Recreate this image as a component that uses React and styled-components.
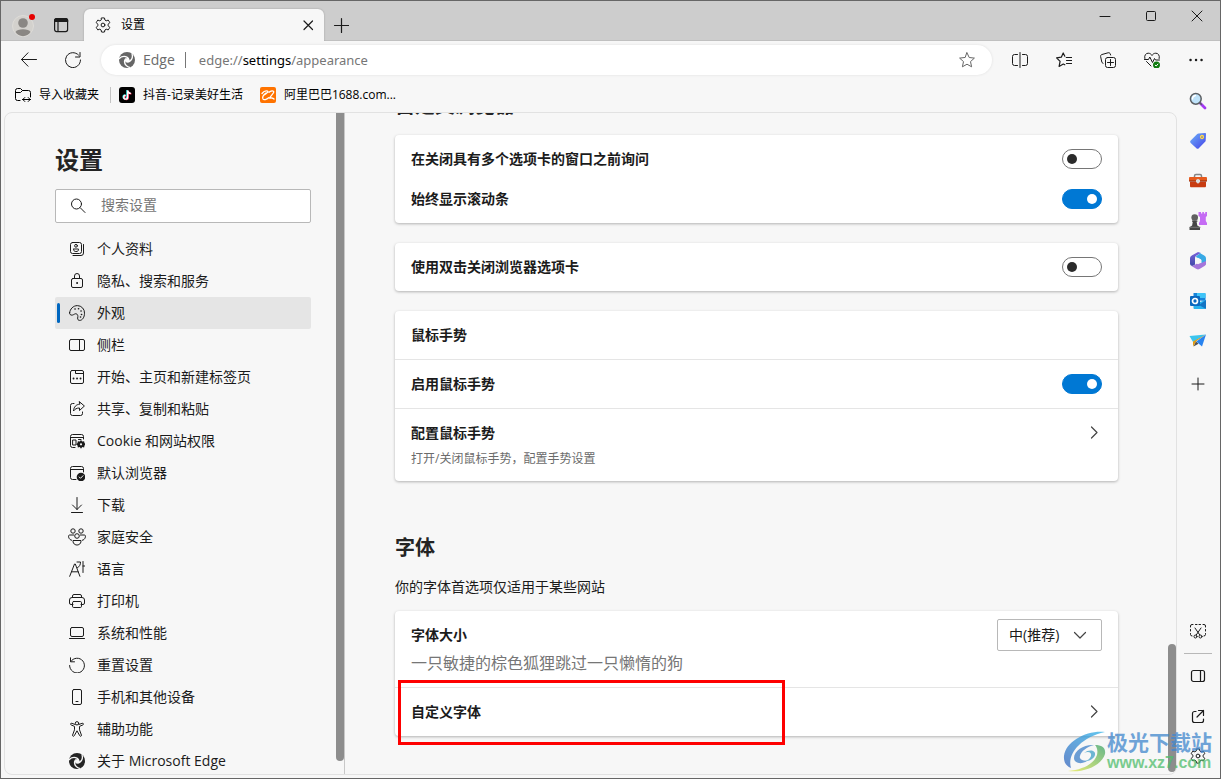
import React, { useState } from "react";
import styled, { createGlobalStyle } from "styled-components";

const GlobalStyle = createGlobalStyle`
  * {
    box-sizing: border-box;
  }
  body {
    margin: 0;
    color: #1b1b1b;
    font-family: "Open Sans", "Noto Sans CJK SC", sans-serif;
    font-size: 14px;
    line-height: 20px;
  }
  button, input, select {
    color: inherit;
    font: inherit;
  }
  button {
    padding: 0;
    border: 0;
    background: none;
  }
  a {
    color: inherit;
    text-decoration: none;
  }
  svg {
    display: block;
    flex: none;
  }
`;

const Window = styled.div`
  position: relative;
  display: flex;
  flex-direction: column;
  height: 100vh;
  border: 1px solid #666666;
  background-color: #f7f7f7;
  overflow: hidden;
`;

const IconButton = styled.button`
  display: flex;
  flex: none;
  align-items: center;
  justify-content: center;
  width: ${(props) => props.$width || 44}px;
  height: ${(props) => props.$height || 32}px;
`;

/* title bar */
const TitleBar = styled.header`
  display: flex;
  flex: none;
  height: 40px;
  padding-left: 3px;
  background-color: #cdcdcd;
  box-shadow: inset 0 -1px 0 #c0c0c0;
`;
const TitleButtons = styled.div`
  display: flex;
  align-items: center;
  padding-top: 8px;
`;
const Tab = styled.div`
  display: flex;
  align-items: center;
  width: 240px;
  margin-top: 8px;
  margin-left: 4px;
  padding-left: 11px;
  border-radius: 6px 6px 0 0;
  background-color: #f7f7f7;
  box-shadow: 0 0 2px rgba(0, 0, 0, 0.25);
  clip-path: inset(-3px -3px 0 -3px);
`;
const TabTitle = styled.span`
  flex: 1;
  padding-left: 10px;
  color: #000000;
  font-size: 12px;
`;
const WindowButtons = styled.div`
  display: flex;
  margin-left: auto;
`;

/* address bar */
const Toolbar = styled.div`
  display: flex;
  flex: none;
  align-items: center;
  height: 38px;
  padding: 0 2px 0 6px;
`;
const AddressBar = styled.div`
  display: flex;
  flex: 1;
  align-items: center;
  height: 30px;
  margin: 0 6px;
  padding: 0 3px 0 18px;
  border-radius: 15px;
  background-color: #ffffff;
  box-shadow: 0 0 3px rgba(0, 0, 0, 0.1);
  color: #6b6b6b;
`;
const SiteName = styled.span`
  padding: 0 10px 0 8px;
`;
const AddressDivider = styled.span`
  width: 1px;
  height: 16px;
  background-color: #767676;
`;
const Address = styled.div`
  flex: 1;
  padding-left: 13px;
  outline: none;
  color: #767676;
  font-family: "Noto Sans", sans-serif;
  font-size: 13px;

  strong {
    color: #000000;
    font-weight: 400;
  }
`;

const Body = styled.div`
  display: flex;
  flex: 1;
  min-height: 0;
`;
const Column = styled.div`
  display: flex;
  flex: 1;
  flex-direction: column;
  min-width: 0;
  padding: 0 0 3px 3px;
`;
const Bookmarks = styled.nav`
  display: flex;
  flex: none;
  align-items: center;
  gap: 17px;
  height: 33px;
  padding: 0 0 2px 11px;
  color: #000000;
  font-size: 12px;
`;
const Bookmark = styled.a`
  display: flex;
  align-items: center;
  gap: 8px;
`;
const BookmarkImport = styled(Bookmark)`
  height: 16px;
  margin-right: -9px;
  padding-right: 11px;
  border-right: 1px solid #c4c4c4;
`;

/* settings page */
const Page = styled.div`
  display: flex;
  flex: 1;
  min-height: 0;
  border: 1px solid #e2e2e2;
  border-radius: 8px;
  overflow: hidden;
`;
const Sidebar = styled.aside`
  display: flex;
  flex: none;
  width: 340px;
  border-right: 1px solid #c8c8c8;
`;
const SidebarContent = styled.div`
  flex: 1;
  padding: 31px 25px 0 50px;
`;
const SidebarTitle = styled.h1`
  margin: 0 0 13px;
  color: #242424;
  font-size: 24px;
  line-height: 32px;
`;
const SearchBox = styled.label`
  display: flex;
  align-items: center;
  gap: 15px;
  height: 34px;
  margin-bottom: 10px;
  padding: 0 14px 2px;
  border: 1px solid #b8b8b8;
  border-radius: 2px;
  background-color: #ffffff;
`;
const SearchInput = styled.input`
  flex: 1;
  min-width: 0;
  padding: 0;
  border: 0;
  outline: none;
  background: none;

  &::placeholder {
    color: #767676;
    opacity: 1;
  }
`;
const NavItem = styled.a`
  display: flex;
  align-items: center;
  gap: 12px;
  height: 32px;
  padding-left: ${(props) => (props.$active ? 9 : 14)}px;
  border-radius: 2px;
  background-color: ${(props) => (props.$active ? "#e5e5e5" : "transparent")};

  &::before {
    content: "";
    display: ${(props) => (props.$active ? "block" : "none")};
    width: 3px;
    height: 20px;
    margin: 0 -3px 0 -7px;
    border-radius: 2px;
    background-color: #0067c0;
  }
`;
const SidebarThumb = styled.div`
  width: 8px;
  margin-bottom: 13px;
  border-radius: 0 0 4px 4px;
  background-color: #8d8d8d;
`;
const Main = styled.main`
  display: flex;
  flex: 1;
  flex-direction: column;
  justify-content: flex-end;
  min-width: 0;
  padding: 0 50px 38px;
  overflow: hidden;

  > * {
    flex: none;
  }
`;
const MainThumb = styled.div`
  align-self: flex-end;
  width: 8px;
  height: 128px;
  margin-bottom: 2px;
  border-radius: 4px;
  background-color: #8d8d8d;
`;
const SectionTitle = styled.h2`
  margin: 0 0 15px;
  color: #242424;
  font-size: 20px;
  line-height: 28px;
`;
const SectionText = styled.p`
  margin: 0 0 14px;
`;
const Card = styled.section`
  margin-bottom: ${(props) => props.$gap || 0}px;
  padding: ${(props) => props.$padding || 0}px 0;
  border-radius: 4px;
  background-color: #ffffff;
  box-shadow: 0 1px 3px rgba(0, 0, 0, 0.28);
`;
const Row = styled.div`
  position: relative;
  display: flex;
  align-items: ${(props) => (props.$top ? "flex-start" : "center")};
  justify-content: space-between;
  min-height: ${(props) => props.$height || 48}px;
  padding: ${(props) => (props.$top ? "8px" : "0")} 16px 0;
  border-top: ${(props) => (props.$lined ? "1px solid #e5e5e5" : "0")};
`;
const Texts = styled.div`
  display: flex;
  flex-direction: column;
  gap: 6px;
  padding-top: 6px;
`;
const Label = styled.label`
  font-weight: 600;
`;
const Hint = styled.span`
  color: #6b6b6b;
  font-size: 12px;
`;
const Sample = styled.span`
  color: #767676;
  font-size: 16px;
  line-height: 24px;
`;
const RowButton = styled(IconButton)`
  margin-right: -8px;
`;
const Toggle = styled.input.attrs({ type: "checkbox" })`
  display: flex;
  align-items: center;
  justify-content: ${(props) => (props.checked ? "flex-end" : "flex-start")};
  appearance: none;
  width: 40px;
  height: 20px;
  margin: 0;
  padding: 0 4px;
  border: 1px solid ${(props) => (props.checked ? "#0078d4" : "#767676")};
  border-radius: 10px;
  background-color: ${(props) => (props.checked ? "#0078d4" : "#ffffff")};

  &::before {
    content: "";
    width: 10px;
    height: 10px;
    border-radius: 50%;
    background-color: ${(props) => (props.checked ? "#ffffff" : "#2b2b2b")};
  }
`;
const SelectBox = styled.div`
  position: relative;

  svg {
    position: absolute;
    top: 8px;
    right: 14px;
    pointer-events: none;
  }
`;
const Select = styled.select`
  display: block;
  appearance: none;
  width: 105px;
  height: 32px;
  padding: 0 0 0 11px;
  border: 1px solid #b8b8b8;
  border-radius: 2px;
  background-color: #ffffff;
`;
const Highlight = styled.div`
  position: absolute;
  top: -8px;
  left: 3px;
  width: 387px;
  height: 65px;
  border: 3px solid #fe0000;
  pointer-events: none;
`;

/* right app rail */
const Rail = styled.aside`
  display: flex;
  flex: none;
  flex-direction: column;
  align-items: center;
  width: 43px;
  padding: 2px 1px 2px 0;
`;
const RailSpace = styled.div`
  flex: 1;
  min-height: 4px;
`;
const RailLine = styled.hr`
  width: 28px;
  margin: 2px 0;
  border: 0;
  border-top: 1px solid #b8b8b8;
`;

const Watermark = styled.div`
  position: absolute;
  right: 8px;
  bottom: 5px;
  display: flex;
  align-items: center;
  gap: 1px;
  opacity: 0.75;
  pointer-events: none;
`;
const WatermarkName = styled.div`
  color: #4187cd;
  font-size: 21px;
  font-weight: 700;
  line-height: 22px;
`;
const WatermarkUrl = styled.div`
  color: #4fbd6c;
  font-family: "Liberation Sans", sans-serif;
  font-size: 16px;
  font-weight: 700;
  line-height: 20px;
`;

const Icon = ({ size = 16, children, width = 1, color = "currentColor" }) => (
  <svg
    width={size}
    height={size}
    viewBox={`0 0 ${size} ${size}`}
    fill="none"
    stroke={color}
    strokeWidth={width}
    strokeLinecap="round"
    strokeLinejoin="round"
    aria-hidden="true"
  >
    {children}
  </svg>
);

const EdgeIcon = ({ color, cut }) => (
  <svg width="16" height="16" viewBox="0 0 16 16" fill="none" aria-hidden="true">
    <circle cx="8" cy="8" r="8" fill={color} />
    <circle cx="8.200" cy="8.200" r="2.300" fill={cut} />
    {[0, 120, 240].map((angle) => (
      <path
        key={angle}
        d="M-.3 6.300C2 3.600 5.600 3 8.200 4.500c1.500.9 2.200 2.200 2.200 3.500l-1.600-1C6.800 4.300 3 4.300.3 7.500Z"
        transform={`rotate(${angle} 8 8)`}
        fill={cut}
      />
    ))}
  </svg>
);

const GearIcon = () => (
  <Icon>
    <path d="M6.500 1a7.500 7.500 0 0 1 3 0l.4 2 1.300.8 2-.7a7.500 7.500 0 0 1 1.500 2.600L13.200 7.200v1.600l1.500 1.500a7.500 7.500 0 0 1-1.500 2.600l-2-.7-1.300.8-.4 2a7.500 7.500 0 0 1-3 0l-.4-2-1.300-.8-2 .7a7.500 7.500 0 0 1-1.500-2.600l1.500-1.500V7.200L1.300 5.700a7.500 7.500 0 0 1 1.500-2.600l2 .7L6.100 3Z" />
    <circle cx="8" cy="8" r="1.900" />
  </Icon>
);

const SidePanelIcon = () => (
  <Icon>
    <rect x=".5" y="2.500" width="15" height="11" rx="1.500" />
    <path d="M10.500 2.500v11" />
  </Icon>
);

const ChevronRight = () => (
  <Icon color="#444444" width={1.2}>
    <path d="m5.500 2 5.500 5.500L5.500 13" />
  </Icon>
);

const navItems = [
  {
    name: "个人资料",
    icon: (
      <Icon>
        <rect x="1.500" y="1.500" width="11" height="11" rx="2" />
        <circle cx="7" cy="4.800" r="1.400" />
        <path d="M4.500 8h5v.8c0 2.400-5 2.400-5 0ZM14.500 3.500V12a2.500 2.500 0 0 1-2.500 2.500H4" />
      </Icon>
    ),
  },
  {
    name: "隐私、搜索和服务",
    icon: (
      <Icon>
        <rect x="2.500" y="5.500" width="11" height="9" rx="1.500" />
        <path d="M5.500 5.500V3a2.500 2.500 0 0 1 5 0v2.500" />
        <circle cx="8" cy="10" r=".5" fill="currentColor" />
      </Icon>
    ),
  },
  {
    name: "外观",
    active: true,
    icon: (
      <Icon>
        <path d="M.6 7.800C1 4 4.200.6 8.400.6a7.200 7.200 0 0 1 7.100 7.600c0 3.900-2 7.200-4.800 7.200-1.500 0-2.300-1-2-2.400.4-2 .2-3.700-1.500-4.200-1.300-.4-2.300 1-3.900 1.300C1.500 10.400.4 9.300.6 7.800Z" />
        <path d="M6 4h.1M9.500 3.700h.1M12 6h.1M12.500 9.500h.1M11.500 12h.1" strokeWidth="1.600" />
      </Icon>
    ),
  },
  { name: "侧栏", icon: <SidePanelIcon /> },
  {
    name: "开始、主页和新建标签页",
    icon: (
      <Icon>
        <rect x="1.500" y="1.500" width="13" height="13" rx="1.500" />
        <path d="M6.500 1.500v3h8" />
        <path d="M4.500 9.500h.1M8 9.500h.1M11.500 9.500h.1" strokeWidth="1.800" />
      </Icon>
    ),
  },
  {
    name: "共享、复制和粘贴",
    icon: (
      <Icon>
        <path d="M5 2.500H3.500a2 2 0 0 0-2 2v8a2 2 0 0 0 2 2h8a2 2 0 0 0 2-2V11" />
        <path d="M10.500.8 15.400 5l-4.900 4.500V7C7.500 7 6 8 4.500 10c.3-4 2.500-6.600 6-6.800Z" />
      </Icon>
    ),
  },
  {
    name: "Cookie 和网站权限",
    icon: (
      <Icon>
        <path d="M14.500 6V3.500a2 2 0 0 0-2-2h-9a2 2 0 0 0-2 2v9a2 2 0 0 0 2 2H6M1.500 4.500h13M4 7h3v5H4ZM9.500 6.500H12" />
        <path d="m12 7 1.200 1.500 1.900-.3.400 1.900 1.200 1.200-1.200 1.200-.4 1.900-1.900-.3L12 15.800l-1.200-1.700-1.900.3-.4-1.900-1.200-1.200 1.200-1.200.4-1.900 1.900.3Z" fill="currentColor" stroke="none" />
        <circle cx="12" cy="11.300" r="1.100" fill="#f7f7f7" stroke="none" />
      </Icon>
    ),
  },
  {
    name: "默认浏览器",
    icon: (
      <Icon>
        <path d="M14.500 7V3.500a2 2 0 0 0-2-2h-9a2 2 0 0 0-2 2v9a2 2 0 0 0 2 2H7M1.500 4.500h13" />
        <circle cx="12" cy="12" r="4.300" fill="currentColor" stroke="none" />
        <path d="m10.200 12 1.300 1.300 2.500-2.600" stroke="#f7f7f7" />
      </Icon>
    ),
  },
  {
    name: "下载",
    icon: (
      <Icon>
        <path d="M8 .5v12M3.500 8 8 12.500 12.500 8M2.500 15.500h11" />
      </Icon>
    ),
  },
  {
    name: "家庭安全",
    icon: (
      <svg width="18" height="18" viewBox="0 0 18 18" fill="none" stroke="currentColor" aria-hidden="true">
        <circle cx="5" cy="3" r="2.200" />
        <circle cx="13" cy="3" r="2.200" />
        <circle cx="9" cy="8" r="2.300" />
        <path d="M6 7H1.500C-.3 7 .5 12 4 12.300M12 7h4.500c1.800 0 1 5-2.500 5.300M5 12.500h8c.5 6-8.500 6-8 0Z" />
      </svg>
    ),
    wide: true,
  },
  {
    name: "语言",
    icon: (
      <Icon>
        <path d="M.7 15.300 5.500 3h.8l4.600 12.300M2.500 10.800h6.700M8 1h3.500c0 2.600-.8 4.500-3 5.700M14 .5v11M14 5h1.700" />
      </Icon>
    ),
  },
  {
    name: "打印机",
    icon: (
      <Icon>
        <path d="M3.500 4.500V3a1.500 1.500 0 0 1 1.500-1.500h6A1.500 1.500 0 0 1 12.500 3v1.500M4 11.500H2A1.500 1.500 0 0 1 .5 10V7A2.500 2.500 0 0 1 3 4.500h10A2.500 2.500 0 0 1 15.500 7v3a1.500 1.500 0 0 1-1.500 1.500h-2" />
        <rect x="3.500" y="8.500" width="9" height="6" rx="1.200" />
      </Icon>
    ),
  },
  {
    name: "系统和性能",
    icon: (
      <Icon>
        <rect x="1.500" y="2.500" width="13" height="9" rx="1.500" />
        <path d="M.5 13.500h15" />
      </Icon>
    ),
  },
  {
    name: "重置设置",
    icon: (
      <Icon>
        <path d="M1.500.8v4h4M1.800 4.500A7.400 7.400 0 1 1 .6 8.500" />
      </Icon>
    ),
  },
  {
    name: "手机和其他设备",
    icon: (
      <Icon>
        <rect x="3.500" y=".5" width="9" height="15" rx="1.500" />
        <path d="M7 12.500h2" />
      </Icon>
    ),
  },
  {
    name: "辅助功能",
    icon: (
      <Icon>
        <circle cx="8" cy="2.300" r="1.700" />
        <path d="m6.200 3.500-3.400-1.200c-1.300-.4-1.800 1.100-.7 1.600L5.500 5.400v3.400l-1.900 5.200c-.4 1.300 1.200 1.800 1.700.7L8 9.800l2.700 4.900c.5 1.100 2.100.6 1.700-.7l-1.900-5.200V5.400l3.400-1.500c1.100-.5.6-2-.7-1.600L9.800 3.500" />
      </Icon>
    ),
  },
  { name: "关于 Microsoft Edge", icon: <EdgeIcon color="#242424" cut="#f7f7f7" /> },
];

const NavIcon = styled.span`
  display: flex;
  flex: none;
  justify-content: center;
  width: 16px;
`;

const railApps = [
  {
    name: "搜索",
    icon: (
      <Icon size={18}>
        <path d="m11.500 11.500 4.500 4.500" stroke="#a238f2" strokeWidth="2.800" />
        <path d="m10.800 10.800 1.500 1.500" stroke="#5c5f63" strokeWidth="1.500" />
        <circle cx="6.800" cy="6.800" r="5.400" fill="#bfe3fa" stroke="#5c5f63" strokeWidth="1.500" />
        <path d="M3.500 7a3.500 3.500 0 0 1 3-3.500" stroke="#ffffff" strokeWidth="1.300" />
      </Icon>
    ),
  },
  {
    name: "购物",
    icon: (
      <Icon size={18}>
        <defs>
          <linearGradient id="tag" x1="0" y1="0" x2="1" y2="1">
            <stop offset="0" stopColor="#6db3f8" />
            <stop offset="1" stopColor="#4540e8" />
          </linearGradient>
        </defs>
        <path d="M9.500 1.500 16 1c.6 0 1 .4 1 1l-.3 6.500c0 .5-.2.900-.6 1.300l-6.300 6.500c-.7.700-1.700.7-2.400 0L1.700 11c-.7-.7-.7-1.700 0-2.400L8.200 2c.4-.3.800-.5 1.300-.5Z" fill="url(#tag)" stroke="none" />
        <circle cx="13" cy="5" r="1.500" fill="#6878ac" stroke="#ffd94d" strokeWidth="1.300" />
      </Icon>
    ),
  },
  {
    name: "工具",
    icon: (
      <Icon size={18}>
        <path d="M5.500 6V4c0-1 .6-1.500 1.500-1.500h4c.9 0 1.500.5 1.500 1.500v2" stroke="#858585" strokeWidth="1.500" />
        <path d="M0 6.200C0 5.500.5 5 1.200 5h15.600c.7 0 1.200.5 1.200 1.200V9H0Z" fill="#e65a1d" stroke="none" />
        <path d="M1 9.500h16V14c0 .8-.5 1.300-1.300 1.300H2.300C1.500 15.300 1 14.800 1 14Z" fill="#c83b10" stroke="none" />
        <path d="M0 9h18" stroke="#8d290d" />
        <path d="M9 6.700 11 8v2l-2 1.700L7 10V8Z" fill="#d9dcdf" stroke="none" />
      </Icon>
    ),
  },
  {
    name: "游戏",
    icon: (
      <Icon size={18}>
        <path d="M9.500 0H12v1.500h1.300V0h1.600v1.500h1.300V0H18v4l-1.200 1v4l1.200 2v2h-8v-2l1-2V5L9.500 4Z" fill="#c56cf4" stroke="none" />
        <circle cx="5.700" cy="5.500" r="3.300" fill="#606060" stroke="none" />
        <path d="M3 8.500h5.400v1.300H7.600l.7 3.700 2.700 1.800V18H.5v-2.700l2.600-1.800.7-3.700H3Z" fill="#464646" stroke="none" />
        <path d="M1 15.300h10" stroke="#777777" />
      </Icon>
    ),
  },
  {
    name: "Microsoft 365",
    icon: (
      <Icon size={18}>
        <defs>
          <linearGradient id="office" x1="0" y1="0" x2="0" y2="1">
            <stop offset="0" stopColor="#7a62db" />
            <stop offset="1" stopColor="#404aa8" />
          </linearGradient>
        </defs>
        <path d="M9 0 2.800 3.500C1.500 4.300 1 5.200 1 6.700v5c0 1.700 2 2.800 3.700 1.800L6 12.500V6c0-1 .4-1.700 1.200-2.200L12 1Z" fill="url(#office)" stroke="none" />
        <path d="m9 0 6.200 3.500C16.500 4.300 17 5.200 17 6.700V11c0 .7-.2 1.200-.5 1.700L12.500 11V8L7 5c0-.6.300-1 .8-1.300L11 1.500Z" fill="#38a9e5" stroke="none" />
        <path d="M1.300 13c1 1 2.400 1.100 3.400.5L8 11.500l4.500-.5 4.500-2v2.500c0 1.200-.6 2-1.500 2.500l-5 3c-1 .6-2 .6-3 0l-5-3Z" fill="#a576db" stroke="none" />
        <path d="m9 5.800 3 1.700v3L9 12.200 6 10.500v-3Z" fill="#f7f7f7" stroke="none" />
      </Icon>
    ),
  },
  {
    name: "Outlook",
    icon: (
      <Icon size={18}>
        <path d="M4.500 1H15c1 0 1.500.5 1.500 1.500V9l-12-1Z" fill="#1683d9" stroke="none" />
        <path d="M8 1h8.500v5H8Z" fill="#3fc4f7" stroke="none" />
        <path d="m4.500 12 12.500-4v7.500c0 .8-.5 1.500-1.500 1.500h-10c-.7 0-1-.5-1-1Z" fill="#29b2ee" stroke="none" />
        <path d="m17 8-7 5 7 4Z" fill="#1475c4" stroke="none" />
        <rect x="1" y="4" width="10" height="10" rx="1" fill="#0b69bf" stroke="none" />
        <circle cx="6" cy="9" r="2.500" stroke="#ffffff" strokeWidth="1.700" />
      </Icon>
    ),
  },
  {
    name: "Drop",
    icon: (
      <Icon size={18}>
        <path d="M.5 4 17 2.500 4 10Z" fill="#3cc4ed" stroke="none" />
        <path d="M17 2.500 4 9.500v5L7.500 9Z" fill="#e29b10" stroke="none" />
        <path d="M4.500 14.500 7 9.500l2.500 2.200Z" fill="#505050" stroke="none" />
        <path d="m17 2.500-9.700 7L13 14.500Z" fill="#2883f0" stroke="none" />
      </Icon>
    ),
  },
];

const App = () => {
  const [toggles, setToggles] = useState({
    askBeforeClose: false,
    showScrollbar: true,
    doubleClick: false,
    gestures: true,
  });

  const renderToggle = (name) => (
    <Toggle
      id={name}
      checked={toggles[name]}
      onChange={(e) => setToggles({ ...toggles, [name]: e.target.checked })}
    />
  );

  return (
    <>
      <GlobalStyle />
      <Window>
        <TitleBar>
          <TitleButtons>
            <IconButton $width={38} aria-label="个人资料">
              <Icon size={24}>
                <circle cx="12" cy="13" r="10.500" fill="#d3d1cd" stroke="#dedcd8" />
                <circle cx="12" cy="10" r="4.800" fill="#8a8784" stroke="none" />
                <path d="M4.500 19c1.500-3.700 13.500-3.700 15 0-3 5.500-12 5.500-15 0Z" fill="#8a8784" stroke="none" />
                <circle cx="21" cy="4" r="3" fill="#e60000" stroke="none" />
              </Icon>
            </IconButton>
            <IconButton $width={38} aria-label="标签页操作">
              <Icon width={1.2}>
                <rect x="1.600" y="1.600" width="13" height="13" rx="2" />
                <path d="M1.600 4.500V3.600c0-1.200.8-2 2-2h9c1.200 0 2 .8 2 2v.9Z" fill="currentColor" />
                <path d="M5 5v9.500" />
              </Icon>
            </IconButton>
          </TitleButtons>
          <Tab>
            <GearIcon />
            <TabTitle>设置</TabTitle>
            <IconButton $width={32} aria-label="关闭标签页">
              <Icon width={1.2}>
                <path d="m4 4 8.500 8.500M12.500 4 4 12.500" />
              </Icon>
            </IconButton>
          </Tab>
          <TitleButtons>
            <IconButton $width={34} aria-label="新建标签页">
              <Icon width={1.2}>
                <path d="M8.500 1.500v14M1.500 8.500h14" />
              </Icon>
            </IconButton>
          </TitleButtons>
          <WindowButtons>
            <IconButton $width={46} $height={30} aria-label="最小化">
              <Icon>
                <path d="M3 8.500h10" />
              </Icon>
            </IconButton>
            <IconButton $width={46} $height={30} aria-label="最大化">
              <Icon>
                <rect x="3.500" y="3.500" width="9" height="9" rx="1" />
              </Icon>
            </IconButton>
            <IconButton $width={46} $height={30} aria-label="关闭">
              <Icon>
                <path d="m3 3 10 10M13 3 3 13" />
              </Icon>
            </IconButton>
          </WindowButtons>
        </TitleBar>

        <Toolbar>
          <IconButton aria-label="返回">
            <Icon>
              <path d="M.5 7.500h15M7 .8.500 7.500 7 14.200" />
            </Icon>
          </IconButton>
          <IconButton aria-label="刷新">
            <Icon>
              <path d="M15.500 8A7.500 7.500 0 1 1 13.500 3M15 .5v4.500h-4.500" />
            </Icon>
          </IconButton>
          <AddressBar>
            <EdgeIcon color="#666666" cut="#ffffff" />
            <SiteName>Edge</SiteName>
            <AddressDivider />
            <Address
              role="textbox"
              aria-label="地址栏"
              contentEditable
              suppressContentEditableWarning
              spellCheck={false}
            >
              edge://<strong>settings</strong>/appearance
            </Address>
            <IconButton aria-label="添加到收藏夹">
              <Icon color="#666666">
                <path d="m8 .8 2.200 4.700 5.200.6-3.900 3.500 1.100 5.200L8 12.200l-4.600 2.600 1.100-5.200L.6 6.100l5.200-.6Z" />
              </Icon>
            </IconButton>
          </AddressBar>
          <IconButton aria-label="分屏">
            <Icon>
              <path d="M8 .5v15M5.500 2.500H2.500a2 2 0 0 0-2 2v7a2 2 0 0 0 2 2h3M10.500 2.500h3a2 2 0 0 1 2 2v7a2 2 0 0 1-2 2h-3" />
            </Icon>
          </IconButton>
          <IconButton aria-label="收藏夹">
            <Icon width={1.2}>
              <path d="M10.300 5.500H15.500M10.500 8.500h5M10.500 11.500h5M8.800 4.200 7.200 1 5.300 5.200.6 5.800l3.500 3.600-1 5 4.200-2.400 1.500.8" />
            </Icon>
          </IconButton>
          <IconButton aria-label="集锦">
            <Icon>
              <rect x="5.500" y="5.500" width="10" height="10" rx="2" />
              <path d="M10.500 7.500v6M7.500 10.500h6M3 11.500 1.800 10 .6 4.500c-.2-1 .4-1.800 1.400-2l6-1.700c1.200-.3 2 .2 2.300 1.200l.3 1" />
            </Icon>
          </IconButton>
          <IconButton aria-label="浏览器概要">
            <Icon>
              <path d="M.8 6.500C0 3.200 2 1.200 4.200 1.200c1.800 0 3 .9 3.800 2.300.8-1.400 2-2.300 3.800-2.300 2.200 0 4.200 2 3.400 5.300M.5 7.500h4l1.300-2.500 2.700 5.500 2-4 1 1.500h4M2.500 9.500l4.500 4.500" />
              <circle cx="12.500" cy="13" r="3.500" fill="#107c10" stroke="none" />
              <path d="m11.200 13.200 1 .8 1.700-1.900" stroke="#ffffff" />
            </Icon>
          </IconButton>
          <IconButton aria-label="设置及其他">
            <Icon>
              <path d="M2.500 8h.1M8 8h.1M13.500 8h.1" strokeWidth="2.400" />
            </Icon>
          </IconButton>
        </Toolbar>

        <Body>
          <Column>
            <Bookmarks>
              <BookmarkImport href="#import">
                <Icon>
                  <path d="M5 13.500H2.500a2 2 0 0 1-2-2v-8a2 2 0 0 1 2-2h3l2 2h6a2 2 0 0 1 2 2V10M.5 5.500h5l2-2M7.500 12.500h8M9.800 10.500l-2 2 2 2M13.200 10.500l2 2-2 2" />
                </Icon>
                导入收藏夹
              </BookmarkImport>
              <Bookmark href="#douyin">
                <svg width="16" height="16" viewBox="0 0 16 16" fill="none" aria-hidden="true">
                  <rect width="16" height="16" rx="3" fill="#000000" />
                  <path d="M8 3v6.800a1.900 1.900 0 1 1-1.900-1.900M8 3c.2 1.800 1.400 3 3.200 3" stroke="#25f4ee" strokeWidth="1.500" />
                  <path d="M9.200 3.800v6.800a1.900 1.900 0 1 1-1.900-1.900M9.200 3.800c.2 1.800 1.400 3 3.200 3" stroke="#fe2c55" strokeWidth="1.500" />
                  <path d="M8.600 3.400v6.800a1.900 1.900 0 1 1-1.900-1.900M8.600 3.400c.2 1.800 1.400 3 3.200 3" stroke="#ffffff" strokeWidth="1.400" />
                </svg>
                抖音-记录美好生活
              </Bookmark>
              <Bookmark href="#alibaba">
                <svg width="16" height="16" viewBox="0 0 16 16" fill="none" aria-hidden="true">
                  <rect width="16" height="16" rx="2" fill="#ff7300" />
                  <path
                    d="M2 6.500c1.500-2 4-3 5.500-2.500 1.300.5-.8 2.500-3.300 3.800M6 6C3.500 7.800 2.300 10.500 3 12c.7 1.300 3.500.6 5.700-1.300M9 5.200c1.800-1.600 4.600-2 4.800-.4.200 1.500-3.300 3.800-4.300 6.700.9-.9 3.400-.6 4.500.5"
                    stroke="#ffffff"
                    strokeWidth="1.300"
                    strokeLinecap="round"
                  />
                </svg>
                阿里巴巴1688.com...
              </Bookmark>
            </Bookmarks>

            <Page>
              <Sidebar>
                <SidebarContent>
                  <SidebarTitle>设置</SidebarTitle>
                  <SearchBox>
                    <Icon>
                      <circle cx="6.500" cy="7" r="5" />
                      <path d="m10.200 10.700 4.800 4.800" />
                    </Icon>
                    <SearchInput type="text" placeholder="搜索设置" aria-label="搜索设置" />
                  </SearchBox>
                  <nav>
                    {navItems.map((item) => (
                      <NavItem key={item.name} href="#settings" $active={item.active}>
                        <NavIcon>{item.icon}</NavIcon>
                        {item.name}
                      </NavItem>
                    ))}
                  </nav>
                </SidebarContent>
                <SidebarThumb />
              </Sidebar>

              <Main>
                <SectionTitle>自定义浏览器</SectionTitle>
                <Card $gap={20} $padding={4}>
                  <Row $height={40}>
                    <Label htmlFor="askBeforeClose">在关闭具有多个选项卡的窗口之前询问</Label>
                    {renderToggle("askBeforeClose")}
                  </Row>
                  <Row $height={40}>
                    <Label htmlFor="showScrollbar">始终显示滚动条</Label>
                    {renderToggle("showScrollbar")}
                  </Row>
                </Card>
                <Card $gap={20}>
                  <Row>
                    <Label htmlFor="doubleClick">使用双击关闭浏览器选项卡</Label>
                    {renderToggle("doubleClick")}
                  </Row>
                </Card>
                <Card $gap={53}>
                  <Row>
                    <Label as="span">鼠标手势</Label>
                  </Row>
                  <Row $lined $height={49}>
                    <Label htmlFor="gestures">启用鼠标手势</Label>
                    {renderToggle("gestures")}
                  </Row>
                  <Row $lined $top $height={73}>
                    <Texts>
                      <Label htmlFor="configGestures">配置鼠标手势</Label>
                      <Hint>打开/关闭鼠标手势，配置手势设置</Hint>
                    </Texts>
                    <RowButton id="configGestures" $width={32}>
                      <ChevronRight />
                    </RowButton>
                  </Row>
                </Card>

                <SectionTitle>字体</SectionTitle>
                <SectionText>你的字体首选项仅适用于某些网站</SectionText>
                <Card>
                  <Row $top $height={76}>
                    <Texts>
                      <Label htmlFor="fontSize">字体大小</Label>
                      <Sample>一只敏捷的棕色狐狸跳过一只懒惰的狗</Sample>
                    </Texts>
                    <SelectBox>
                      <Select id="fontSize" defaultValue="medium">
                        <option value="small">小</option>
                        <option value="medium">中(推荐)</option>
                        <option value="large">大</option>
                      </Select>
                      <Icon color="#444444" width={1.2}>
                        <path d="m2.500 5.500 5.500 5.500 5.500-5.500" />
                      </Icon>
                    </SelectBox>
                  </Row>
                  <Row $lined $height={49}>
                    <Label htmlFor="customFonts">自定义字体</Label>
                    <RowButton id="customFonts" $width={32}>
                      <ChevronRight />
                    </RowButton>
                    <Highlight />
                  </Row>
                </Card>
              </Main>
              <MainThumb />
            </Page>
          </Column>

          <Rail>
            {railApps.map((app) => (
              <IconButton key={app.name} $width={42} $height={40} aria-label={app.name}>
                {app.icon}
              </IconButton>
            ))}
            <IconButton $width={42} $height={46} aria-label="自定义边栏">
              <Icon>
                <path d="M8 2v12M2 8h12" />
              </Icon>
            </IconButton>
            <RailSpace />
            <IconButton $width={42} $height={40} aria-label="截图">
              <Icon>
                <path d="M.5 4V3A1.500 1.500 0 0 1 2 1.500h1M5.500 1.500h1.500M9 1.500h1.500M13 1.500h1A1.500 1.500 0 0 1 15.500 3v1M.5 6.500V8M15.500 6.500V8M.5 10.500v1A1.500 1.500 0 0 0 2 13M15.500 10.500v1A1.500 1.500 0 0 1 14 13M5 5l4.800 7M11 5l-4.800 7" />
                <circle cx="5.500" cy="13.500" r="1.500" />
                <circle cx="10.500" cy="13.500" r="1.500" />
              </Icon>
            </IconButton>
            <RailLine />
            <IconButton $width={42} $height={40} aria-label="隐藏边栏">
              <Icon width={1.2}>
                <rect x="1.500" y="2.500" width="13" height="11" rx="2" />
                <path d="M10.500 2.500v11" />
              </Icon>
            </IconButton>
            <IconButton $width={42} $height={40} aria-label="在新窗口中打开">
              <Icon width={1.2}>
                <path d="M6 3.500H4.500a2 2 0 0 0-2 2v7a2 2 0 0 0 2 2h7a2 2 0 0 0 2-2V11M8.500 2.500h5v5M13.500 2.500 7 9" />
              </Icon>
            </IconButton>
            <IconButton $width={42} $height={40} aria-label="边栏设置">
              <GearIcon />
            </IconButton>
          </Rail>
        </Body>

        <Watermark>
          <svg width="43" height="42" viewBox="0 0 43 42" fill="none" aria-hidden="true">
            <defs>
              <linearGradient id="swooshBlue" x1="1" y1="0" x2="0" y2="1">
                <stop offset="0" stopColor="#2fb4ea" />
                <stop offset="1" stopColor="#3565bd" />
              </linearGradient>
              <linearGradient id="swooshGreen" x1="1" y1="0" x2="0" y2="1">
                <stop offset="0" stopColor="#37a267" />
                <stop offset="1" stopColor="#e8ea4a" />
              </linearGradient>
            </defs>
            <path d="M42 1C24-1 3 10 1 25c-.5 6 2 10 7 12C4 24 16 7 42 1Z" fill="url(#swooshBlue)" />
            <path d="M31 14c-9-1-20 5-20 13 0 5 7 7 13 3-5 0-8-2-7-5 1-5 7-9 14-11Z" fill="#3d7fc9" />
            <path d="M21 22c4-2 8-1 7 3-1 3-4 5-8 5 5 1 11-2 12-6 1-5-6-6-11-2Z" fill="#3f9fc8" />
            <path d="M32 14c7 0 11 3 10 9-3 11-20 19-37 17 14-1 26-7 29-16 1-4 0-8-2-10Z" fill="url(#swooshGreen)" />
          </svg>
          <div>
            <WatermarkName>极光下载站</WatermarkName>
            <WatermarkUrl>www.xz7.com</WatermarkUrl>
          </div>
        </Watermark>
      </Window>
    </>
  );
};

export default App;
